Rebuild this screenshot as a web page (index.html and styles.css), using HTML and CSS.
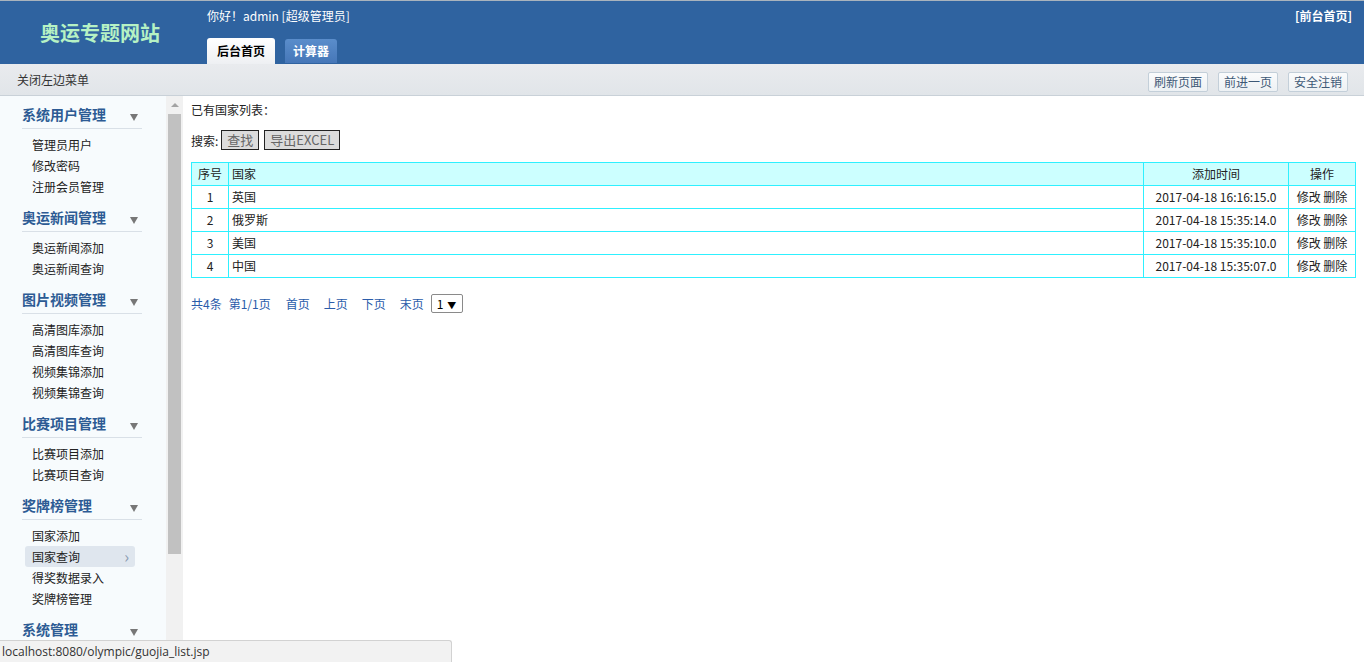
FILE: index.html
```html
<!DOCTYPE html>
<html lang="zh-CN">
<head>
<meta charset="utf-8">
<title>奥运专题网站</title>
<link rel="stylesheet" href="styles.css">
</head>
<body>
<div class="header">
  <div class="logo">奥运专题网站</div>
  <div class="head-mid">
    <div class="welcome">你好！admin [超级管理员]</div>
    <div class="tabs">
      <span class="tab tab-on">后台首页</span>
      <span class="tab tab-off">计算器</span>
    </div>
  </div>
  <div class="head-right">[前台首页]</div>
</div>
<div class="subbar">
  <span class="close-menu">关闭左边菜单</span>
  <div class="sub-btns">
    <span class="sbtn">刷新页面</span>
    <span class="sbtn">前进一页</span>
    <span class="sbtn">安全注销</span>
  </div>
</div>
<div class="body">
  <div class="side">
    <div class="menu">
      <div class="group">
        <div class="gh"><span>系统用户管理</span><i class="tri"></i></div>
        <div class="item">管理员用户</div>
        <div class="item">修改密码</div>
        <div class="item">注册会员管理</div>
      </div>
      <div class="group">
        <div class="gh"><span>奥运新闻管理</span><i class="tri"></i></div>
        <div class="item">奥运新闻添加</div>
        <div class="item">奥运新闻查询</div>
      </div>
      <div class="group">
        <div class="gh"><span>图片视频管理</span><i class="tri"></i></div>
        <div class="item">高清图库添加</div>
        <div class="item">高清图库查询</div>
        <div class="item">视频集锦添加</div>
        <div class="item">视频集锦查询</div>
      </div>
      <div class="group">
        <div class="gh"><span>比赛项目管理</span><i class="tri"></i></div>
        <div class="item">比赛项目添加</div>
        <div class="item">比赛项目查询</div>
      </div>
      <div class="group">
        <div class="gh"><span>奖牌榜管理</span><i class="tri"></i></div>
        <div class="item">国家添加</div>
        <div class="item item-on">国家查询<span class="chev">&#x203A;</span></div>
        <div class="item">得奖数据录入</div>
        <div class="item">奖牌榜管理</div>
      </div>
      <div class="group">
        <div class="gh"><span>系统管理</span><i class="tri"></i></div>
      </div>
    </div>
    <div class="sbar">
      <div class="sbar-up"><i></i></div>
      <div class="sbar-thumb"></div>
    </div>
  </div>
  <div class="main">
    <div class="title">已有国家列表：</div>
    <div class="search">搜索: <span class="btn">查找</span><span class="btn">导出EXCEL</span></div>
    <table class="grid">
      <tr class="hd"><td class="c-no">序号</td><td class="c-name">国家</td><td class="c-time">添加时间</td><td class="c-op">操作</td></tr>
      <tr><td class="c-no">1</td><td class="c-name">英国</td><td class="c-time">2017-04-18 16:16:15.0</td><td class="c-op">修改 删除</td></tr>
      <tr><td class="c-no">2</td><td class="c-name">俄罗斯</td><td class="c-time">2017-04-18 15:35:14.0</td><td class="c-op">修改 删除</td></tr>
      <tr><td class="c-no">3</td><td class="c-name">美国</td><td class="c-time">2017-04-18 15:35:10.0</td><td class="c-op">修改 删除</td></tr>
      <tr><td class="c-no">4</td><td class="c-name">中国</td><td class="c-time">2017-04-18 15:35:07.0</td><td class="c-op">修改 删除</td></tr>
    </table>
    <div class="pager">
      <span>共4条</span>
      <span class="p2">第1/1页</span>
      <span class="p3">首页</span>
      <span class="p4">上页</span>
      <span class="p4">下页</span>
      <span class="p4">末页</span>
      <span class="sel">1 <b>&#9660;</b></span>
    </div>
  </div>
</div>
<div class="status">localhost:8080/olympic/guojia_list.jsp</div>
</body>
</html>
```

FILE: styles.css
```css
* { box-sizing: border-box; }
html, body { margin: 0; padding: 0; }
body {
  width: 1364px;
  height: 662px;
  overflow: hidden;
  font-family: "Noto Sans CJK SC", "Liberation Sans", sans-serif;
  font-size: 12px;
  color: #222;
  background: #fff;
}
.header {
  height: 64px;
  border-top: 1px solid #a9b3bd;
  background: #2f63a0;
  display: flex;
}
.logo {
  width: 207px;
  padding-left: 40px;
  padding-top: 19px;
  font-size: 20px;
  font-weight: bold;
  color: #b6f2c4;
  line-height: 26px;
}
.head-mid { flex: 1; display: flex; flex-direction: column; }
.welcome {
  color: #fff;
  font-size: 12px;
  line-height: 16px;
  padding-top: 7px;
  height: 37px;
}
.tabs { display: flex; gap: 10px; align-items: flex-end; height: 26px; }
.tab {
  height: 26px;
  line-height: 26px;
  font-size: 12px;
  font-weight: bold;
  text-align: center;
  border-radius: 3px 3px 0 0;
}
.tab-on {
  width: 68px;
  color: #000;
  background: linear-gradient(#ffffff, #eef0f3);
}
.tab-off {
  width: 52px;
  height: 24px;
  line-height: 24px;
  margin-bottom: 1px;
  color: #fff;
  background: linear-gradient(#5a8dcb, #4677b8);
}
.head-right {
  color: #fff;
  font-weight: bold;
  font-size: 12px;
  line-height: 16px;
  padding-top: 7px;
  padding-right: 12px;
}
.subbar {
  height: 32px;
  background: linear-gradient(#e9ebee, #e1e5e9);
  border-bottom: 1px solid #c9d1d8;
  display: flex;
  align-items: center;
  justify-content: space-between;
  padding: 0 16px 0 17px;
}
.close-menu { color: #333; }
.sub-btns { display: flex; gap: 10px; margin-top: 4px; }
.sbtn {
  width: 60px;
  height: 20px;
  line-height: 18px;
  text-align: center;
  border: 1px solid #c3cfd9;
  border-radius: 2px;
  background: linear-gradient(#fafbfc, #edf1f4);
  color: #3d5876;
}
.body { display: flex; height: 566px; }
.side { display: flex; width: 183px; background: #f7fbfd; }
.menu { width: 166px; overflow: hidden; padding-top: 8px; }
.group { padding-bottom: 10px; }
.gh {
  margin-left: 22px;
  width: 120px;
  height: 25px;
  line-height: 22px;
  border-bottom: 1px solid #d9e0e7;
  margin-bottom: 5px;
  display: flex;
  justify-content: space-between;
  align-items: center;
  font-size: 14px;
  font-weight: bold;
  color: #2d5b94;
}
.gh span { position: relative; top: -2px; }
.tri {
  width: 0; height: 0;
  border-left: 4px solid transparent;
  border-right: 4px solid transparent;
  border-top: 7px solid #777;
  margin-right: 4px;
  margin-top: 3px;
}
.item {
  height: 21px;
  line-height: 21px;
  padding-left: 32px;
  color: #222;
}
.item-on {
  margin-left: 25px;
  width: 110px;
  padding-left: 7px;
  background: #dfe6ee;
  border-radius: 3px;
  display: flex;
  justify-content: space-between;
  padding-right: 6px;
}
.chev { color: #8a9bb0; font-size: 16px; line-height: 20px; }
.sbar { width: 17px; background: #f1f1f1; display: flex; flex-direction: column; }
.sbar-up { height: 18px; display: flex; justify-content: center; align-items: center; }
.sbar-up i {
  width: 0; height: 0;
  border-left: 4px solid transparent;
  border-right: 4px solid transparent;
  border-bottom: 4px solid #a3a3a3;
}
.sbar-thumb { margin: 0 2px; height: 440px; background: #c1c1c1; }
.main { flex: 1; padding: 5px 8px 0 8px; }
.title { line-height: 18px; }
.search {
  margin-top: 11px;
  height: 20px;
  display: flex;
  align-items: center;
}
.btn {
  height: 20px;
  line-height: 18px;
  padding: 0 5px;
  border: 1px solid #222;
  background: #dcdcdc;
  color: #666;
  font-size: 13px;
  margin-left: 3px;
}
.btn + .btn { margin-left: 5px; }
.grid {
  margin-top: 12px;
  width: 1165px;
  border-collapse: collapse;
  border: 1px solid #2ef0ff;
}
.grid td {
  border: 1px solid #2ef0ff;
  height: 23px;
  padding: 0 3px;
  line-height: 20px;
}
.grid .hd td { background: #ccffff; }
.c-no { width: 37px; text-align: center; }
.c-name { text-align: left; }
.c-time { width: 145px; text-align: center; }
.c-op { width: 67px; text-align: center; }
.pager {
  margin-top: 16px;
  display: flex;
  align-items: center;
  color: #2a5caa;
  height: 19px;
}
.p2 { margin-left: 7px; }
.p3 { margin-left: 15px; }
.p4 { margin-left: 14px; }
.sel {
  margin-left: 7px;
  width: 32px;
  height: 19px;
  border: 1px solid #8a8a8a;
  border-radius: 2px;
  color: #000;
  padding-left: 5px;
  line-height: 17px;
  font-size: 12px;
  background: #fff;
}
.sel b { font-size: 9px; font-weight: normal; margin-left: 1px; }
.status {
  position: fixed;
  left: 0;
  bottom: 0;
  width: 452px;
  height: 22px;
  line-height: 21px;
  padding-left: 2px;
  background: #f2f2f2;
  border-top: 1px solid #d2d2d2;
  border-right: 1px solid #d2d2d2;
  border-top-right-radius: 3px;
  font-family: "Open Sans", "Noto Sans", sans-serif;
  font-size: 12px;
  color: #333;
}
```
